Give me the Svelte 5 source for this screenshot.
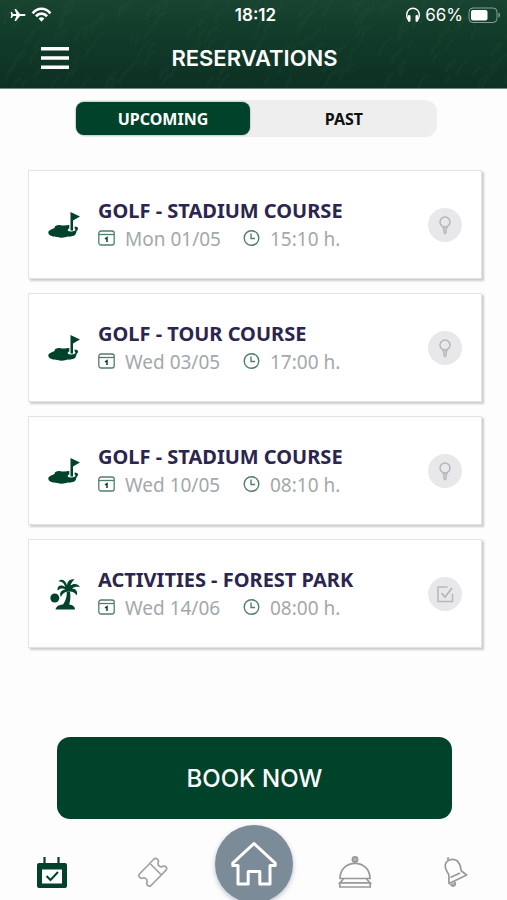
<script>
  const reservations = [
    { kind: 'golf', title: 'GOLF - STADIUM COURSE', date: 'Mon 01/05', time: '15:10 h.' },
    { kind: 'golf', title: 'GOLF - TOUR COURSE', date: 'Wed 03/05', time: '17:00 h.' },
    { kind: 'golf', title: 'GOLF - STADIUM COURSE', date: 'Wed 10/05', time: '08:10 h.' },
    { kind: 'activity', title: 'ACTIVITIES - FOREST PARK', date: 'Wed 14/06', time: '08:00 h.' },
  ];

  // grass blades behind the header, scattered evenly but irregularly
  const blades = Array.from({ length: 170 }, (_, i) => ({
    x: (i * 83 + ((i * i) % 29)) % 520,
    y: (i * 37 + ((i * i) % 17)) % 92,
    len: 5 + ((i * 7) % 9),
  }));

  let tab = $state('upcoming');
</script>

<div class="app">
  <header class="header">
    <svg class="grass" viewBox="0 0 507 88" preserveAspectRatio="xMidYMid slice" aria-hidden="true">
      {#each blades as b}
        <path d="M{b.x} {b.y}q{b.len / 4} {-b.len} {b.len} {-b.len * 1.3}" />
      {/each}
    </svg>

    <div class="status">
      <div class="status-side">
        <svg width="16" height="16" viewBox="0 0 16 16" fill="#fff" aria-hidden="true">
          <path d="M15.600 8c0 .7-.8 1.100-1.800 1.100H10L6 14H4.500l1.900-4.900H3.200L1.700 11H.6l.7-3-.7-3h1.100l1.500 1.900h3.200L4.500 2H6l4 4.900h3.800c1 0 1.800.4 1.800 1.100z" />
        </svg>
        <svg width="21" height="16" viewBox="0 0 22 16" fill="none" stroke="#fff" stroke-width="2.800" aria-hidden="true">
          <path d="M1.700 6.200C7-.1 15-.1 20.300 6.200" />
          <path d="M5.200 9.300c3.300-3.700 8.300-3.700 11.600 0" />
          <path d="M8 11.600c1.700-1.800 4.300-1.800 6 0L11 15z" fill="#fff" stroke="none" />
        </svg>
      </div>
      <span class="clock">18:12</span>
      <div class="status-side end">
        <svg width="14" height="16" viewBox="0 0 14 16" fill="none" stroke="#fff" aria-hidden="true">
          <path d="M2.600 13.200C.6 11 .7 8.500.8 7.500a6.200 6.200 0 0 1 12.400 0c.1 1 .2 3.500-1.800 5.700" stroke-width="1.400" />
          <path d="M3.200 9.200v4.400M10.800 9.200v4.400" stroke-width="2.600" stroke-linecap="round" />
        </svg>
        <span class="percent">66%</span>
        <svg width="33" height="17" viewBox="0 0 33 17" aria-hidden="true">
          <rect x="1" y="1" width="28" height="14.500" rx="4" fill="none" stroke="#fff" stroke-opacity=".5" />
          <rect x="3" y="3" width="16.500" height="10.500" rx="2" fill="#fff" />
          <path d="M30.500 5.800c2 .6 2 4.300 0 4.900z" fill="#fff" opacity=".5" />
        </svg>
      </div>
    </div>

    <div class="title-row">
      <button type="button" class="menu" aria-label="Menu">
        <svg width="28" height="24" viewBox="0 0 28 24" fill="#fff" aria-hidden="true">
          <path d="M0 1h28v3.500H0zM0 10.200h28v3.500H0zM0 19.400h28v3.500H0z" />
        </svg>
      </button>
      <h1>RESERVATIONS</h1>
    </div>
  </header>

  <main>
    <div class="tabs" role="tablist">
      <button
        type="button"
        role="tab"
        class:active={tab === 'upcoming'}
        aria-selected={tab === 'upcoming'}
        onclick={() => (tab = 'upcoming')}
      >UPCOMING</button>
      <button
        type="button"
        role="tab"
        class:active={tab === 'past'}
        aria-selected={tab === 'past'}
        onclick={() => (tab = 'past')}
      >PAST</button>
    </div>

    <ul class="list">
      {#each reservations as r}
        <li class="card">
          {#if r.kind === 'golf'}
            <svg width="32" height="32" viewBox="0 0 32 32" fill="#00432a" aria-hidden="true">
              <path d="M22.500 3l9.500 4.600L25 11.500v10h-2.500z" />
              <path d="M6.500 19c0-2.500 3-3.200 6-2.800 3 .4 5 .5 8-.1h.8v3.500c-2 .6-2.200 2.400 0 2.700 2 .3 3.500.2 5-.3 1.500-.9 1.500-1.900.3-2.500v-2c2.500 0 4 1.200 3.400 2.700-.8 1.300-1.600 1.500-1.800 3.400-.6 3.500-4.500 4.300-8.800 4-2.500 1.200-7 1.400-10 .4C4.500 28 .3 26.200.3 23.800c0-2.800 3.200-3.200 6.200-4.800z" />
            </svg>
          {:else}
            <svg width="32" height="32" viewBox="0 0 32 32" fill="#00432a" aria-hidden="true">
              <circle cx="6.800" cy="20" r="4.500" />
              <path d="M7.500 31.500c.5-3.300 4-5 7.500-5.100 3.200-4.500 4-8.500 3.700-13h3.300c.8 4.500.4 9-.8 13.100 3.300.6 5.800 2 5.800 5z" />
              <path d="M20 11.500C18.500 1 13 0 10.500 3.500c4-.2 5.500 2 6.800 5.500C12 5.500 9 8.500 9.500 12.500c3-2.600 5.500-2.500 8-1-5 .5-6.500 4-4.500 7.500 1.200-3.500 3.500-5 7-5.500z" />
              <path d="M19 10.500C18.500 5 20.500.5 26.500 1.500c-1.500 1-3.500 3.500-4 6 2.500-2.300 7.500-2.500 9.500 1.700-3-.7-6-.3-8 1.300 3.500 0 6.500 3 4.500 7-1.500-3-4-4.500-8.500-4z" />
            </svg>
          {/if}

          <div class="info">
            <h2>{r.title}</h2>
            <div class="meta">
              <span class="date">
                <svg width="17" height="17" viewBox="0 0 17 17" fill="none" stroke="#4f8069" stroke-width="1.300" aria-hidden="true">
                  <rect x=".8" y="1" width="15.400" height="14" rx="2.200" />
                  <path d="M1 4.500h15" />
                  <path d="M7 9l2-1.400v4.500" stroke="#00432a" stroke-width="1.500" />
                </svg>
                {r.date}
              </span>
              <span class="time">
                <svg width="17" height="17" viewBox="0 0 17 17" fill="none" stroke="#4f8069" stroke-width="1.400" aria-hidden="true">
                  <circle cx="8.500" cy="8" r="7.300" />
                  <path d="M8 3.500v5h4" />
                </svg>
                {r.time}
              </span>
            </div>
          </div>

          <span class="badge">
            {#if r.kind === 'golf'}
              <svg width="20" height="20" viewBox="0 0 20 20" fill="none" stroke="#b5b6ba" aria-hidden="true">
                <circle cx="10" cy="7" r="5" stroke-width="1.500" />
                <path d="M7.500 12h5l-.9 2-.5 4.500q-1.100 1-2.200 0L8.400 14z" fill="#c4c5c9" stroke-width=".8" />
              </svg>
            {:else}
              <svg width="20" height="20" viewBox="0 0 20 20" fill="none" stroke="#b5b6ba" stroke-width="1.500" aria-hidden="true">
                <path d="M12.500 3H3v14.500h14.500V10" />
                <path d="M6.500 9l3.500 4 7-9" stroke-width="1.800" />
              </svg>
            {/if}
          </span>
        </li>
      {/each}
    </ul>

    <button type="button" class="book">BOOK NOW</button>
  </main>

  <nav>
    <a href="#reservations" aria-label="Reservations" aria-current="page">
      <svg width="32" height="34" viewBox="0 0 32 34" aria-hidden="true">
        <path d="M8.500 1v8M22.500 1v8" stroke="#00432a" stroke-width="2.200" />
        <rect x="1" y="7" width="30" height="25" rx="2" fill="#00432a" />
        <rect x="6" y="13.500" width="20" height="14" fill="#fff" />
        <path d="M10.500 20l4 4 7.500-8" fill="none" stroke="#00432a" stroke-width="2" />
      </svg>
    </a>
    <a href="#tickets" aria-label="Tickets">
      <svg width="32" height="32" viewBox="0 0 32 32" fill="none" stroke="#a2a2a2" stroke-width="1.700" stroke-linejoin="round" aria-hidden="true">
        <path d="M2.500 17L16.500 2.500q2-2 3.800-.3 1.700 1.500.9 3.300-.6 2.400 1.300 3.800 1.500 1 3.500 0 2-.6 3.300 1 1 1.500-.5 3L14 28.500q-2 1.500-3.500-.3-1.300-1.300-.5-3 .5-2.500-1.200-3.600-1.600-1.200-3.600-.3-1.700.3-2.900-1.400-1-1.400.2-2.900z" />
        <path d="M13.500 7l10.500 10.500" />
      </svg>
    </a>
    <a href="#home" class="home" aria-label="Home">
      <svg width="48" height="48" viewBox="0 0 48 48" fill="none" stroke="#fff" stroke-width="3" aria-hidden="true">
        <path d="M24 3.500L2.800 23.200v2.300H8V44h10.200V31.500h11.600V44H40V25.500h5.200v-2.300z" stroke-linejoin="round" />
      </svg>
    </a>
    <a href="#services" aria-label="Services">
      <svg width="34" height="34" viewBox="0 0 34 34" fill="none" stroke="#999" stroke-width="1.700" aria-hidden="true">
        <circle cx="17" cy="3.500" r="2.600" fill="#b5b5b5" />
        <path d="M2 22.500C2 2.200 32 2.200 32 22.500z" />
        <path d="M5.500 23L1.800 26.800h30.400L28.500 23M1.800 26.800V31h30.400v-4.200" />
      </svg>
    </a>
    <a href="#notifications" aria-label="Notifications">
      <svg width="32" height="34" viewBox="0 0 32 34" fill="none" stroke="#999" stroke-width="1.700" stroke-linejoin="round" aria-hidden="true">
        <path d="M8.500 3.700L7.700 1.500" stroke-width="2.200" />
        <path d="M9 27.500l-.2-9C3.500 11 4.500 6 9.500 4c6-2 10 1.200 11.300 8.500l.6 2.500 5.300 4z" />
        <path d="M10.500 21.500l9.500-4.500" />
        <path d="M10.500 28q1.500 3.500 4.500 1 .5-1.500 0-3" fill="#b5b5b5" />
      </svg>
    </a>
  </nav>
</div>

<style>
  :global(body) {
    margin: 0;
    background: #fdfdfd;
  }
  .app {
    display: flex;
    flex-direction: column;
    min-height: 100vh;
    font-family: 'Noto Sans', 'Open Sans', sans-serif;
  }
  button {
    border: 0;
    padding: 0;
    font-family: inherit;
    cursor: pointer;
  }
  svg { display: block; flex: none; }
  h1, h2 { margin: 0; }

  .header {
    position: relative;
    box-sizing: border-box;
    height: 89px;
    background: linear-gradient(#184430, #113a29 45%, #0d3124);
    border-bottom: 1px solid #6f8c7f;
    color: #fff;
    font-family: Inter, 'Liberation Sans', sans-serif;
  }
  .grass {
    position: absolute;
    inset: 0;
    width: 100%;
    height: 100%;
    fill: none;
    stroke: #3c7458;
    stroke-width: 3;
    opacity: 0.08;
  }
  .status {
    position: relative;
    display: flex;
    align-items: center;
    height: 30px;
    padding: 0 6px 0 10px;
  }
  .status-side {
    display: flex;
    flex: 1;
    align-items: center;
    gap: 5px;
  }
  .end { justify-content: flex-end; }
  .clock {
    font-size: 17px;
    font-weight: 600;
  }
  .percent {
    font-size: 17px;
    font-weight: 400;
  }
  .title-row {
    position: relative;
    display: grid;
    grid-template-columns: 1fr auto 1fr;
    align-items: center;
    height: 56px;
    padding-left: 2px;
  }
  .menu {
    justify-self: start;
    margin-left: 39px;
    background: none;
  }
  h1 {
    font-size: 22px;
    font-weight: 600;
    line-height: 28px;
  }

  main {
    display: flex;
    flex: 1;
    flex-direction: column;
  }
  .tabs {
    display: grid;
    grid-template-columns: 35fr 37fr;
    margin: 11px 70px 0 75px;
    border-radius: 12px;
    background: #eee;
  }
  .tabs button {
    height: 33px;
    margin: 2px 1px;
    border-radius: 8px;
    background: none;
    color: #111;
    font-size: 16px;
    font-weight: 700;
  }
  .tabs .active {
    background: #00432a;
    color: #fff;
    box-shadow: 0 0 2px rgba(0, 0, 0, 0.4);
  }

  .list {
    display: flex;
    flex-direction: column;
    gap: 14px;
    margin: 33px 25px 0 28px;
    padding: 0;
    list-style: none;
  }
  .card {
    display: flex;
    align-items: center;
    box-sizing: border-box;
    height: 109px;
    padding: 0 19px;
    border: 1px solid #e3e3e3;
    background: #fff;
    box-shadow: 2px 2px 2px #ccc;
  }
  .info {
    flex: 1;
    margin-left: 18px;
  }
  h2 {
    color: #2b2550;
    font-size: 20px;
    font-weight: 700;
    line-height: 28px;
  }
  .meta {
    display: flex;
    color: #a3a8ab;
    font-size: 19px;
    line-height: 28px;
  }
  .date, .time {
    display: flex;
    align-items: center;
    gap: 10px;
  }
  .date { min-width: 145px; }
  .badge {
    display: grid;
    place-items: center;
    width: 34px;
    height: 34px;
    border-radius: 50%;
    background: #e8e8ea;
  }

  .book {
    height: 82px;
    margin: auto 55px 0 57px;
    border-radius: 13px;
    background: #00432a;
    color: #fff;
    font-family: Inter, 'Liberation Sans', sans-serif;
    font-size: 24px;
    font-weight: 500;
  }

  nav {
    display: grid;
    grid-template-columns: repeat(5, 1fr);
    justify-items: center;
    align-items: center;
    height: 81px;
    padding-left: 1px;
    overflow: hidden;
  }
  nav a { margin-top: 24px; }
  nav .home {
    display: grid;
    place-items: center;
    align-self: start;
    width: 78px;
    height: 78px;
    margin-top: 6px;
    border-radius: 50%;
    background: #7b8b97;
    box-shadow: 0 2px 5px rgba(80, 100, 130, 0.4);
  }
</style>
